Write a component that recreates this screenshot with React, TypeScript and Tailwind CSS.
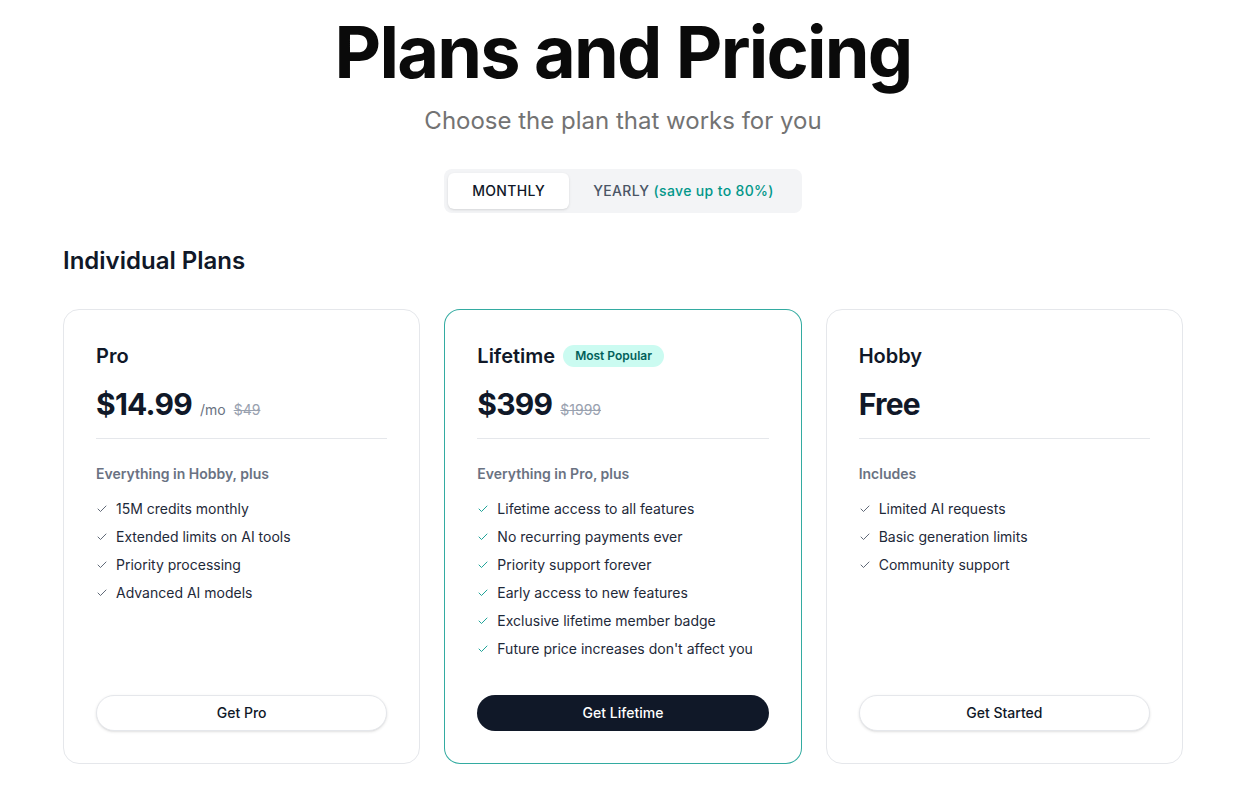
import { Check } from "lucide-react";

type Plan = {
  name: string;
  price: string;
  unit?: string;
  was?: string;
  badge?: string;
  lead: string;
  features: string[];
  cta: string;
  featured?: boolean;
};

const plans: Plan[] = [
  {
    name: "Pro",
    price: "$14.99",
    unit: "/mo",
    was: "$49",
    lead: "Everything in Hobby, plus",
    features: ["15M credits monthly", "Extended limits on AI tools", "Priority processing", "Advanced AI models"],
    cta: "Get Pro",
  },
  {
    name: "Lifetime",
    price: "$399",
    was: "$1999",
    badge: "Most Popular",
    lead: "Everything in Pro, plus",
    features: [
      "Lifetime access to all features",
      "No recurring payments ever",
      "Priority support forever",
      "Early access to new features",
      "Exclusive lifetime member badge",
      "Future price increases don't affect you",
    ],
    cta: "Get Lifetime",
    featured: true,
  },
  {
    name: "Hobby",
    price: "Free",
    lead: "Includes",
    features: ["Limited AI requests", "Basic generation limits", "Community support"],
    cta: "Get Started",
  },
];

function PlanCard({ plan }: { plan: Plan }) {
  return (
    <div
      className={`flex flex-col rounded-2xl border bg-white p-8 h-[455px] ${
        plan.featured ? "border-teal-600/80" : "border-gray-200"
      }`}
    >
      <div className="flex items-center gap-2 h-7">
        <h3 className="text-xl font-semibold text-gray-900">{plan.name}</h3>
        {plan.badge && (
          <span className="rounded-full bg-teal-100 px-3 py-[3px] text-xs font-semibold text-teal-800">
            {plan.badge}
          </span>
        )}
      </div>

      <div className="mt-4 flex items-baseline gap-2">
        <span className="text-3xl font-bold tracking-tight text-gray-900">{plan.price}</span>
        {plan.unit && <span className="text-sm text-gray-500">{plan.unit}</span>}
        {plan.was && <span className="text-sm text-gray-400 line-through">{plan.was}</span>}
      </div>

      <div className="mt-4 border-t border-gray-200" />

      <p className="mt-[25px] text-sm font-semibold text-gray-500">{plan.lead}</p>

      <ul className="mt-[15px] flex flex-col gap-2">
        {plan.features.map((f) => (
          <li key={f} className="flex items-center gap-2 text-sm text-gray-800">
            <Check
              size={12}
              strokeWidth={1.75}
              className={plan.featured ? "text-teal-600" : "text-gray-600"}
            />
            {f}
          </li>
        ))}
      </ul>

      <button
        className={`mt-auto h-9 w-full rounded-full text-sm font-medium ${
          plan.featured
            ? "bg-gray-900 text-white"
            : "border border-gray-200 bg-white text-gray-900 shadow-sm"
        }`}
      >
        {plan.cta}
      </button>
    </div>
  );
}

export default function App() {
  return (
    <div className="min-h-screen bg-white pr-[5px] font-['Inter',sans-serif] text-gray-900">
      <div className="flex flex-col items-center pt-4">
        <h1 className="text-7xl leading-none font-bold tracking-tight text-neutral-950">Plans and Pricing</h1>
        <p className="mt-[17px] text-2xl text-neutral-500">Choose the plan that works for you</p>

        <div className="mt-8 flex rounded-lg bg-gray-100 p-1">
          <button className="rounded-md bg-white px-6 py-2 text-sm font-medium tracking-wide text-gray-900 shadow-sm">
            MONTHLY
          </button>
          <button className="px-6 py-2 text-sm font-medium tracking-wide text-gray-600">
            YEARLY <span className="text-teal-600">(save up to 80%)</span>
          </button>
        </div>
      </div>

      <div className="mx-auto w-[1120px]">
        <h2 className="mt-8 text-2xl font-semibold text-gray-900">Individual Plans</h2>
        <div className="mt-8 grid grid-cols-3 gap-6">
          {plans.map((p) => (
            <PlanCard key={p.name} plan={p} />
          ))}
        </div>
      </div>
    </div>
  );
}
